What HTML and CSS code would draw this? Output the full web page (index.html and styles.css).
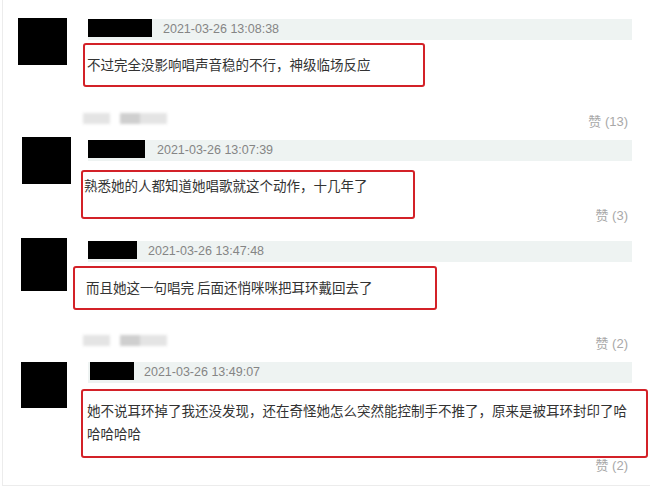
FILE: index.html
```html
<!DOCTYPE html>
<html lang="zh-CN">
<head>
  <meta charset="UTF-8">
  <title>评论</title>
  <link rel="stylesheet" href="styles.css">
</head>
<body>
  <div class="panel">
    <!-- 第一条评论 -->
    <div class="comment c1">
      <div class="avatar"></div>
      <div class="main">
        <div class="head"><span class="name"></span><span class="time">2021-03-26 13:08:38</span></div>
        <div class="text">不过完全没影响唱声音稳的不行，神级临场反应</div>
        <div class="foot">
          <span class="blur"><i></i><i class="dark"></i><i></i></span>
          <span class="like">赞 (13)</span>
        </div>
      </div>
    </div>

    <div class="comment c2">
      <div class="avatar"></div>
      <div class="main">
        <div class="head"><span class="name"></span><span class="time">2021-03-26 13:07:39</span></div>
        <div class="text">熟悉她的人都知道她唱歌就这个动作，十几年了</div>
        <div class="foot">
          <span class="like">赞 (3)</span>
        </div>
      </div>
    </div>

    <div class="comment c3">
      <div class="avatar"></div>
      <div class="main">
        <div class="head"><span class="name"></span><span class="time">2021-03-26 13:47:48</span></div>
        <div class="text">而且她这一句唱完 后面还悄咪咪把耳环戴回去了</div>
        <div class="foot">
          <span class="blur"><i></i><i class="dark"></i><i></i></span>
          <span class="like">赞 (2)</span>
        </div>
      </div>
    </div>

    <div class="comment c4">
      <div class="avatar"></div>
      <div class="main">
        <div class="head"><span class="name"></span><span class="time">2021-03-26 13:49:07</span></div>
        <div class="text">她不说耳环掉了我还没发现，还在奇怪她怎么突然能控制手不推了，原来是被耳环封印了哈哈哈哈哈</div>
        <div class="foot">
          <span class="like">赞 (2)</span>
        </div>
      </div>
    </div>
  </div>
</body>
</html>
```

FILE: styles.css
```css
body {
  margin: 0;
  background: #fff;
  font-family: "Liberation Sans", Arial, "Noto Sans CJK SC", sans-serif;
  color: #333;
}
.panel {
  margin-left: 2px;
  border-left: 1px solid #ececec;
  border-bottom: 1px solid #ececec;
  padding: 18px 0 11px;
}
.comment {
  display: grid;
  grid-template-columns: 80px 1fr;
}
.avatar {
  width: 49px;
  height: 47px;
  background: #000;
  align-self: start;
}
.head {
  height: 21px;
  margin: 0 18px 0 5px;
  background: #eef3f2;
  display: flex;
  align-items: center;
}
.name {
  display: inline-block;
  background: #000;
  height: 18px;
  margin-top: -3px;
}
.time {
  font-size: 12.5px;
  line-height: 21px;
  color: #858585;
}
.text {
  box-sizing: border-box;
  border: 2px solid #d32128;
  border-radius: 3px;
  font-family: "Noto Sans CJK SC", sans-serif;
  font-size: 13.5px;
  line-height: 23px;
  color: #333;
}
.foot {
  height: 16px;
  display: flex;
  justify-content: space-between;
}
.like {
  margin-left: auto;
  padding-right: 22px;
  font-family: "Liberation Sans", "Noto Sans CJK SC", sans-serif;
  font-size: 13px;
  line-height: 16px;
  color: #a8a8a8;
}
.blur {
  display: flex;
  height: 11px;
  margin-top: -1px;
  filter: blur(1.5px);
}
.blur i {
  display: block;
  width: 27px;
  background: #e4e4e4;
}
.blur i.dark {
  width: 20px;
  margin-left: 10px;
  background: #cfcfcf;
}

/* 每条截图的位置略有不同 */
.c1 .avatar { margin-left: 15px; }
.c1 .head { margin-top: 1px; }
.c1 .name { width: 64px; margin-right: 11px; }
.c1 .text { width: 342px; margin-top: 3px; padding: 8px 4px 9px 2px; }
.c1 .foot { margin-top: 27px; }

.c2 { margin-top: 7px; }
.c2 .avatar { margin-left: 19px; }
.c2 .head { margin-top: 3px; }
.c2 .name { width: 57px; margin-right: 12px; }
.c2 .text { width: 334px; margin: 9px 0 0 -2px; padding: 2px 4px 20px 1px; }
.c2 .foot { margin-top: -11px; }

.c3 { margin-top: 14px; }
.c3 .avatar { margin-left: 18px; width: 46px; height: 53px; }
.c3 .head { margin-top: 3px; }
.c3 .name { width: 49px; margin-right: 11px; }
.c3 .text { width: 364px; margin: 4px 0 0 -10px; padding: 8px 4px 9px 11px; }
.c3 .foot { margin-top: 26px; }

.c4 { margin-top: 10px; }
.c4 .avatar { margin-left: 18px; width: 46px; height: 46px; }
.c4 .name { width: 44px; margin-left: 2px; margin-right: 10px; }
.c4 .text { width: 567px; margin: 6px 0 0 -2px; padding: 8px 12px 11px 4px; }
```
